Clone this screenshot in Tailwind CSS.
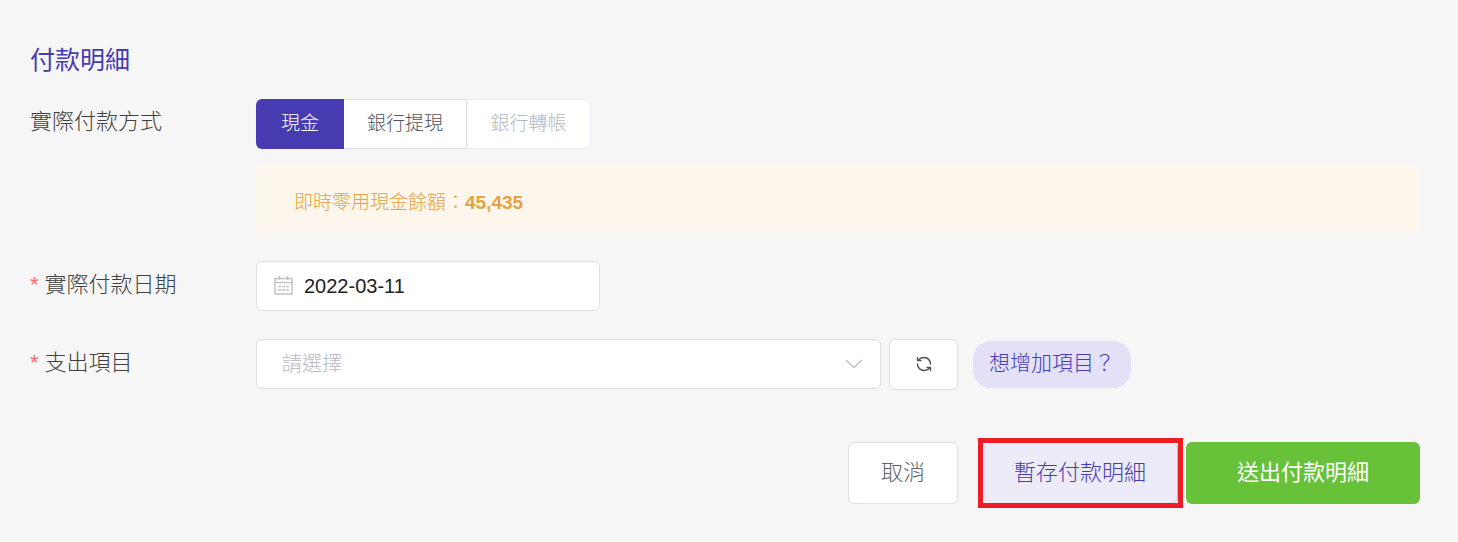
<!DOCTYPE html>
<html lang="zh-Hant">
<head>
<meta charset="utf-8">
<meta name="viewport" content="width=device-width, initial-scale=1">
<title>付款明細</title>
<script src="https://cdn.jsdelivr.net/npm/@tailwindcss/browser@4"></script>
</head>
<body class="min-h-screen bg-[#f6f6f6] font-['Liberation_Sans','Noto_Sans_CJK_TC',sans-serif] font-light text-[#404040]">
<form class="pt-10 pr-[38px] pb-8 pl-[30px]">
  <h2 class="text-[25px] leading-10 font-normal text-[#463bb0]">付款明細</h2>

  <div class="mt-[19px] flex" role="radiogroup" aria-labelledby="method-label">
    <div id="method-label" class="w-[226px] shrink-0 text-[22px] leading-[46px]">實際付款方式</div>
    <div class="min-w-0 flex-1">
      <div class="flex h-[50px] text-[19px] leading-[48px]">
        <label class="w-[88px] rounded-l-md bg-[#463bb0] pt-px text-center text-white">
          <input type="radio" name="method" class="sr-only" checked>現金
        </label>
        <label class="w-[123px] border-y border-r border-[#dcdfe6] bg-white text-center text-[#505256]">
          <input type="radio" name="method" class="sr-only">銀行提現
        </label>
        <label class="w-[124px] rounded-r-md border-y border-r border-[#ebeef5] bg-white text-center text-[#b4b8c0]">
          <input type="radio" name="method" class="sr-only" disabled>銀行轉帳
        </label>
      </div>
      <p class="mt-4 rounded-md bg-[#fdf6ec] px-[38px] pt-[22px] pb-[14px] text-[19px] leading-8 text-[#e6a23c]">即時零用現金餘額：<strong class="font-bold">45,435</strong></p>
    </div>
  </div>

  <div class="mt-7 flex">
    <label for="date" class="flex w-[226px] shrink-0 gap-[6px] text-[22px] leading-[48px]"><span class="text-[#f56c6c]" aria-hidden="true">*</span>實際付款日期</label>
    <div class="flex h-[50px] w-[344px] items-center rounded-md border border-[#dcdfe6] bg-white pl-[17px]">
      <svg class="size-5 shrink-0" viewBox="0 0 20 20" fill="none" stroke="#c0c4cc" stroke-width="1.5" aria-hidden="true">
        <path d="M1 2.500h17v15.500H1zM1 6.500h17M5.500 0v4M13.500 0v4"/>
        <path d="M4 10.500h11M4 14h11" stroke-dasharray="3 1"/>
      </svg>
      <input id="date" type="text" value="2022-03-11" class="ml-[10px] min-w-0 flex-1 bg-transparent text-[20px] font-normal text-[#222222] outline-none">
    </div>
  </div>

  <div class="mt-7 flex">
    <label for="item" class="flex w-[226px] shrink-0 gap-[6px] text-[22px] leading-[48px]"><span class="text-[#f56c6c]" aria-hidden="true">*</span>支出項目</label>
    <div class="grid h-[50px] w-[625px] items-center">
      <select id="item" class="col-start-1 row-start-1 h-full w-full appearance-none rounded-md border border-[#dcdfe6] bg-white pl-[25px] text-[20px] text-[#b4b8c0]">
        <option>請選擇</option>
      </select>
      <svg class="pointer-events-none col-start-1 row-start-1 mr-[18px] h-[10px] w-[18px] justify-self-end" viewBox="0 0 18 10" fill="none" stroke="#c0c4cc" stroke-width="1.700" stroke-linecap="round" stroke-linejoin="round" aria-hidden="true"><path d="M1.500 1.500 9 8.500l7.500-7"/></svg>
    </div>
    <button type="button" aria-label="重新整理" class="ml-2 flex h-[51px] w-[69px] items-center justify-center rounded-md border border-[#dcdfe6] bg-white pb-0.5 text-[#505256]">
      <svg class="size-4" viewBox="0 0 16 16" fill="none" stroke="currentColor" stroke-width="1.400" stroke-linecap="round" stroke-linejoin="round" aria-hidden="true">
        <path d="M2.600 4.200C5 .8 11 .4 13.600 4.600c.6 1 .9 2.100.9 3.400M1.500 1.600v3h3.500"/>
        <path d="M13.400 11.800C11 15.200 5 15.600 2.400 11.400c-.6-1-.9-2.100-.9-3.400M14.500 14.400v-3H11"/>
      </svg>
    </button>
    <button type="button" class="mt-0.5 ml-[15px] h-[47px] rounded-[18px] bg-[#e3e0f8] px-4 pb-1 text-[21px] font-light text-[#463bb0]">想增加項目？</button>
  </div>

  <div class="mt-12 flex items-center justify-end text-[22px]">
    <button type="button" class="h-[62px] w-[110px] rounded-md border border-[#dcdfe6] bg-white pb-0.5 text-[#606266]">取消</button>
    <div class="ml-5 border-5 border-[#ee1c25]">
      <button type="button" class="block h-[60px] w-[195px] rounded-md border-r border-[#b5b1df] bg-[#edebf7] pb-0.5 text-[#463bb0]">暫存付款明細</button>
    </div>
    <button type="submit" class="ml-[3px] h-[62px] w-[234px] rounded-md bg-[#67c23a] pb-0.5 font-normal text-white">送出付款明細</button>
  </div>
</form>
</body>
</html>
